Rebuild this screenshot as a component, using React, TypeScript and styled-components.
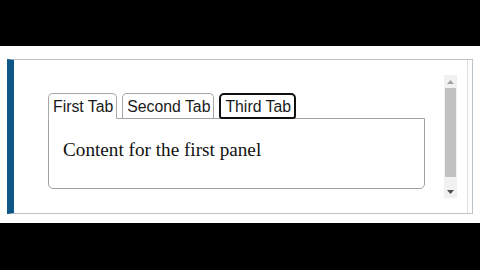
import React from "react";
import styled, { createGlobalStyle } from "styled-components";

const Global = createGlobalStyle`
  html, body { margin: 0; padding: 0; background: #000; }
  #root { width: 480px; height: 270px; }
`;

const Page = styled.div`
  width: 480px;
  height: 270px;
  display: flex;
  flex-direction: column;
  background: #000;
`;

const Band = styled.div<{ $h: number }>`
  height: ${(p) => p.$h}px;
  background: #000;
  flex: none;
`;

const Screen = styled.div`
  height: 177px;
  background: #fff;
  padding: 13px 7px 0 7px;
  box-sizing: border-box;
  flex: none;
`;

const Box = styled.div`
  height: 155px;
  box-sizing: border-box;
  border: 1px solid #b9c3c9;
  border-left: 7px solid #0d5889;
  display: flex;
  background: #fff;
`;

const Main = styled.div`
  flex: none;
  width: 377px;
  margin-left: 34px;
  padding-top: 33px;
  display: flex;
  flex-direction: column;
`;

const TabRow = styled.div`
  display: flex;
  align-items: flex-end;
  gap: 5px;
  height: 25px;
`;

const Tab = styled.button<{ $focus?: boolean }>`
  font-family: "Liberation Sans", Arial, sans-serif;
  font-size: 15.8px;
  color: #1a1a1a;
  background: #fff;
  height: ${(p) => (p.$focus ? 26 : 25)}px;
  box-sizing: border-box;
  padding: 1px 3px 0 4px;
  border: ${(p) => (p.$focus ? "2px solid #111" : "1px solid #a8a8a8")};
  border-bottom: ${(p) => (p.$focus ? "2px solid #111" : "none")};
  border-radius: 5px 5px ${(p) => (p.$focus ? "3px 3px" : "0 0")};
  line-height: 22px;
  margin: 0;
  cursor: pointer;
  margin-bottom: ${(p) => (p.$focus ? "-1px" : "0")};
  position: relative;
  z-index: ${(p) => (p.$focus ? 1 : 0)};
  &:first-child {
    border-bottom: 1px solid #fff;
    margin-bottom: -1px;
    height: 26px;
    z-index: 2;
  }
`;

const Panel = styled.div`
  height: 71px;
  box-sizing: border-box;
  border: 1px solid #a0a0a0;
  border-radius: 0 0 5px 5px;
  padding: 20px 14px 0 14px;
  font-family: "Liberation Serif", "Times New Roman", serif;
  font-size: 19.2px;
  line-height: 22px;
  color: #111;
`;

const Scrollbar = styled.div`
  flex: none;
  width: 13px;
  margin-left: 19px;
  margin-top: 15px;
  height: 123px;
  background: #f1f1f1;
  display: flex;
  flex-direction: column;
`;

const Arrow = styled.div`
  height: 13px;
  display: flex;
  align-items: center;
  justify-content: center;
  flex: none;
`;

const Thumb = styled.div`
  margin: 0 1px;
  height: 89px;
  background: #c1c1c1;
  flex: none;
`;

const Spacer = styled.div`
  flex: 1;
`;

const Divider = styled.div`
  flex: none;
  width: 1px;
  margin-left: 10px;
  background: #dedede;
`;

export default function App() {
  return (
    <>
      <Global />
      <Page>
        <Band $h={46} />
        <Screen>
          <Box>
            <Main>
              <TabRow>
                <Tab>First Tab</Tab>
                <Tab>Second Tab</Tab>
                <Tab $focus>Third Tab</Tab>
              </TabRow>
              <Panel>Content for the first panel</Panel>
            </Main>
            <Scrollbar>
              <Arrow>
                <svg width="7" height="4" viewBox="0 0 7 4">
                  <path d="M0 4 L3.5 0 L7 4 Z" fill="#a3a3a3" />
                </svg>
              </Arrow>
              <Thumb />
              <Spacer />
              <Arrow>
                <svg width="7" height="4" viewBox="0 0 7 4">
                  <path d="M0 0 L3.5 4 L7 0 Z" fill="#505050" />
                </svg>
              </Arrow>
            </Scrollbar>
            <Divider />
          </Box>
        </Screen>
        <Band $h={47} />
      </Page>
    </>
  );
}
